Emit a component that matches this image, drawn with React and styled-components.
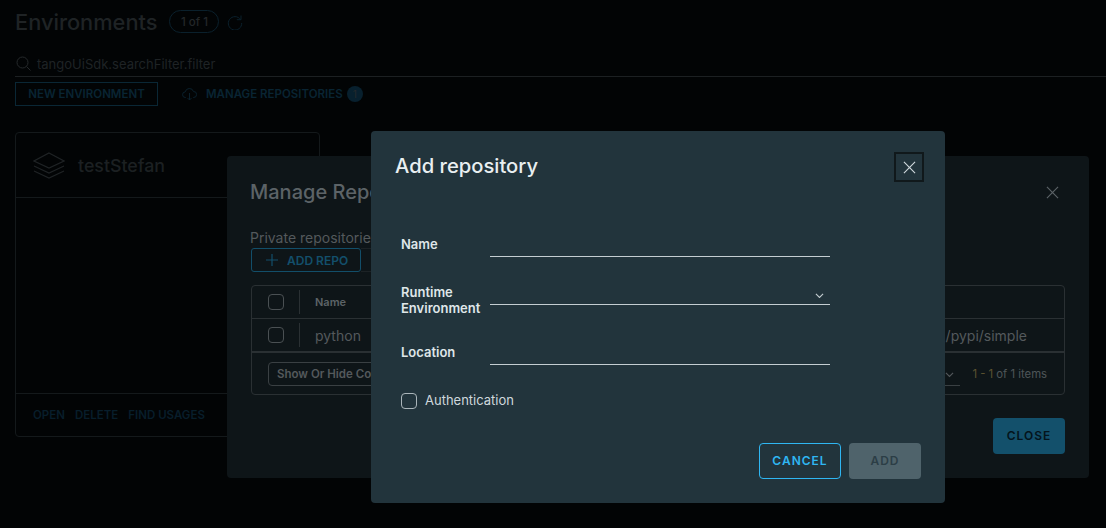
import React from 'react';
import styled, { createGlobalStyle } from 'styled-components';

const GlobalStyle = createGlobalStyle`
  html, body {
    margin: 0;
    padding: 0;
    height: 100%;
    background: #020405;
    overflow: hidden;
  }
  body, button {
    font-family: Inter, "Open Sans", sans-serif;
  }
  * {
    box-sizing: border-box;
  }
`;

const Page = styled.div`
  position: relative;
  width: 1106px;
  height: 528px;
  padding: 9px 0 0 15px;
  overflow: hidden;
`;

const Header = styled.div`
  display: flex;
  align-items: center;
  height: 25px;
`;

const PageTitle = styled.h1`
  margin: 0;
  font-size: 21.8px;
  font-weight: 500;
  color: #1f2325;
`;

const CountBadge = styled.span`
  margin-left: 12px;
  width: 50px;
  height: 23px;
  border: 1px solid #0a202c;
  border-radius: 12px;
  display: flex;
  align-items: center;
  justify-content: center;
  font-size: 11.5px;
  font-weight: 500;
  color: #232729;
`;

const IconSlot = styled.span`
  display: inline-flex;
  color: ${(p) => p.$color || '#0a202c'};
  margin: ${(p) => p.$margin || '0'};
`;

const SearchBar = styled.div`
  display: flex;
  align-items: center;
  gap: 6px;
  height: 25px;
  margin-top: 18px;
  padding: 1px 0 2px 1px;
  border-bottom: 1px solid #1c2022;
  font-size: 13px;
  color: #1f2325;
`;

const Toolbar = styled.div`
  display: flex;
  align-items: center;
  margin-top: 5px;
`;

const OutlineAction = styled.span`
  width: 143px;
  height: 24px;
  border: 1px solid #0a2735;
  display: flex;
  align-items: center;
  justify-content: center;
  font-size: 11.5px;
  font-weight: 600;
  color: #092433;
`;

const LinkAction = styled.span`
  margin-left: 9px;
  font-size: 11.5px;
  font-weight: 600;
  color: #092433;
`;

const RoundCount = styled.span`
  margin-left: 4px;
  width: 16px;
  height: 16px;
  border-radius: 50%;
  background: #08202e;
  display: flex;
  align-items: center;
  justify-content: center;
  font-size: 10px;
  color: #25292b;
`;

const EnvCard = styled.section`
  width: 305px;
  height: 305px;
  margin-top: 26px;
  border: 1px solid #14191b;
  border-radius: 4px;
  display: flex;
  flex-direction: column;
`;

const EnvHead = styled.div`
  display: flex;
  align-items: center;
  gap: 13px;
  height: 65px;
  padding-left: 17px;
  border-bottom: 1px solid #14191b;
  font-size: 17.8px;
  font-weight: 500;
  color: #1c2022;
`;

const EnvBody = styled.div`
  flex: 1;
`;

const EnvFoot = styled.div`
  display: flex;
  gap: 10px;
  height: 43px;
  align-items: center;
  padding-left: 17px;
  border-top: 1px solid #14191b;
  font-size: 11.5px;
  font-weight: 600;
  color: #081e2b;
`;

const Dialog = styled.div`
  position: absolute;
  display: flex;
  flex-direction: column;
  border-radius: 4px;
`;

const ManageDialog = styled(Dialog)`
  left: 227px;
  top: 156px;
  width: 862px;
  height: 322px;
  padding: 24px 24px 24px 23px;
  background: #0e1518;
`;

const DialogHead = styled.div`
  display: flex;
  justify-content: space-between;
  align-items: center;
  height: 24px;
`;

const ManageTitle = styled.h2`
  margin: 0;
  font-size: 20px;
  font-weight: 500;
  color: #5c6367;
`;

const ManageText = styled.div`
  margin-top: 26px;
  font-size: 14px;
  line-height: 16px;
  color: #54595c;
`;

const RepoActions = styled.div`
  display: flex;
  margin: 2px 0 0 1px;
  height: 24px;
`;

const AddRepoButton = styled.span`
  width: 110px;
  border: 1px solid #124e69;
  border-radius: 3px;
  display: flex;
  align-items: center;
  gap: 9px;
  padding-left: 14px;
  font-size: 12px;
  font-weight: 600;
  color: #134f6b;
`;

const GhostButton = styled.span`
  width: 40px;
  border: 1px solid #1c2225;
  border-left: none;
`;

const RepoTable = styled.div`
  width: 814px;
  margin: 13px 0 0 1px;
  border: 1px solid #2a3033;
  border-radius: 4px;
`;

const TableRow = styled.div`
  display: flex;
  align-items: center;
  height: ${(p) => p.$height}px;
  border-bottom: ${(p) => p.$rule || '1px'} solid #2a3033;
  padding-left: 16px;
`;

const RowCheck = styled.span`
  width: 16px;
  height: 16px;
  border: 1px solid #4a5053;
  border-radius: 4px;
`;

const ColRule = styled.span`
  width: 1px;
  height: 24px;
  margin: 0 15px 0 15px;
  background: #2a3033;
`;

const NameHead = styled.span`
  font-size: 11px;
  font-weight: 600;
  color: #5c6367;
`;

const NameCell = styled.span`
  font-size: 14px;
  color: #54595c;
`;

const PathCell = styled.span`
  margin-left: auto;
  margin-right: 37px;
  font-size: 14px;
  color: #54595c;
`;

const TableFoot = styled.div`
  display: flex;
  align-items: center;
  height: 41px;
  padding-left: 16px;
`;

const ColumnsButton = styled.span`
  width: 140px;
  height: 24px;
  border: 1px solid #3a4043;
  border-radius: 4px;
  display: flex;
  align-items: center;
  padding-left: 8px;
  font-size: 11.5px;
  font-weight: 600;
  white-space: nowrap;
  overflow: hidden;
  color: #54595c;
`;

const PageSize = styled.span`
  margin-left: auto;
  width: 30px;
  height: 24px;
  padding: 4px 0 0 8px;
  border-bottom: 1px solid #3a4043;
  display: flex;
  align-items: center;
  justify-content: center;
  color: #54595c;
`;

const ItemCount = styled.span`
  margin: 0 17px 0 12px;
  font-size: 11.3px;
  color: #4f5558;

  b {
    font-weight: 400;
    color: #5d5330;
  }
`;

const ManageFoot = styled.div`
  margin-top: auto;
  display: flex;
  justify-content: flex-end;
`;

const CloseButton = styled.span`
  width: 72px;
  height: 36px;
  padding-bottom: 2px;
  border-radius: 4px;
  background: #13506b;
  display: flex;
  align-items: center;
  justify-content: center;
  font-size: 12px;
  font-weight: 600;
  letter-spacing: 1px;
  color: #04141c;
`;

const IconClose = styled.span`
  display: flex;
  color: #5c6367;
  margin-right: 6px;
`;

const AddDialog = styled(Dialog)`
  left: 371px;
  top: 131px;
  width: 574px;
  height: 372px;
  padding: 21px 21px 24px 24px;
  background: #22343c;
`;

const AddHead = styled.div`
  display: flex;
  justify-content: space-between;
  align-items: flex-start;
`;

const AddTitle = styled.h2`
  margin: 0;
  font-size: 20.2px;
  line-height: 28px;
  font-weight: 500;
  color: #e9eff1;
`;

const FocusClose = styled.button`
  width: 30px;
  height: 30px;
  padding: 0;
  background: none;
  border: 2px solid #10181b;
  display: flex;
  align-items: center;
  justify-content: center;
  color: #cfd8dc;
`;

const Form = styled.div`
  display: flex;
  flex-direction: column;
  margin-top: 43px;
  padding-left: 6px;
`;

const FieldRow = styled.div`
  display: grid;
  grid-template-columns: 89px 340px;
  height: ${(p) => p.$height}px;
  margin-top: ${(p) => p.$gap || 0}px;
`;

const FieldLabel = styled.label`
  font-size: 13px;
  line-height: 16px;
  font-weight: 600;
  color: #dfe6e9;
  align-self: end;
  margin-bottom: ${(p) => (p.$low ? '-11px' : '5px')};
`;

const FieldLine = styled.div`
  border-bottom: 1px solid #c4cdd1;
  display: flex;
  align-items: flex-end;
  justify-content: flex-end;
  padding: 0 6px 6px 0;
  color: #c4cdd1;
`;

const CheckRow = styled.label`
  display: flex;
  align-items: center;
  gap: 8px;
  margin-top: 28px;
  font-size: 13px;
  color: #cfd8dc;
`;

const CheckText = styled.span`
  margin-top: -2px;
`;

const CheckBox = styled.span`
  width: 16px;
  height: 16px;
  border: 1px solid #aab5ba;
  border-radius: 4px;
`;

const AddFoot = styled.div`
  margin-top: auto;
  padding-right: 3px;
  display: flex;
  justify-content: flex-end;
  gap: 8px;
`;

const CancelButton = styled.button`
  width: 82px;
  height: 36px;
  padding: 0 0 2px;
  background: none;
  border: 1px solid #2fb6f2;
  border-radius: 4px;
  font-size: 12px;
  font-weight: 600;
  letter-spacing: 1px;
  color: #2fb6f2;
`;

const SubmitButton = styled.button`
  width: 72px;
  height: 36px;
  padding: 0 0 2px;
  background: #4f636b;
  border: none;
  border-radius: 4px;
  font-size: 12px;
  font-weight: 600;
  letter-spacing: 1px;
  color: #2c3e46;
`;

const X = ({ size = 13 }) => (
  <svg width={size} height={size} viewBox="0 0 14 14" fill="none" stroke="currentColor" strokeWidth="1.2">
    <path d="M1 1l12 12M13 1L1 13" />
  </svg>
);

const Chevron = ({ size = 9 }) => (
  <svg width={size} height={size * 0.6} viewBox="0 0 10 6" fill="none" stroke="currentColor" strokeWidth="1.2">
    <path d="M1 1l4 4 4-4" />
  </svg>
);

const App = () => (
  <Page>
    <GlobalStyle />
    <Header>
      <PageTitle>Environments</PageTitle>
      <CountBadge>1 of 1</CountBadge>
      <IconSlot $margin="0 0 0 8px">
        <svg width="16" height="16" viewBox="0 0 16 16" fill="none" stroke="currentColor" strokeWidth="1">
          <path d="M13.5 5.5A6.7 6.7 0 1 0 14.7 9" />
          <path d="M14 1.5v4.2H9.8" />
        </svg>
      </IconSlot>
    </Header>
    <SearchBar>
      <IconSlot $color="#25292b">
        <svg width="15" height="15" viewBox="0 0 15 15" fill="none" stroke="currentColor" strokeWidth="1">
          <circle cx="6.5" cy="6.5" r="5.5" />
          <path d="M10.5 10.5l4 4" />
        </svg>
      </IconSlot>
      tangoUiSdk.searchFilter.filter
    </SearchBar>
    <Toolbar>
      <OutlineAction>NEW ENVIRONMENT</OutlineAction>
      <IconSlot $margin="0 0 0 24px">
        <svg width="15" height="14" viewBox="0 0 15 14" fill="none" stroke="currentColor" strokeWidth="1">
          <path d="M4 10.5H3.5a2.8 2.8 0 0 1-.3-5.6 4.3 4.3 0 0 1 8.3-.4 3 3 0 0 1 .2 6H11" />
          <path d="M7.5 6v7M5.5 11l2 2 2-2" />
        </svg>
      </IconSlot>
      <LinkAction>MANAGE REPOSITORIES</LinkAction>
      <RoundCount>1</RoundCount>
    </Toolbar>
    <EnvCard>
      <EnvHead>
        <IconSlot $color="#1f2325">
          <svg width="32" height="28" viewBox="0 0 32 28" fill="none" stroke="currentColor" strokeWidth="1.2">
            <path d="M16 2L31 10 16 17 1 10z" />
            <path d="M1 15l15 7 15-7M1 20l15 7 15-7" />
          </svg>
        </IconSlot>
        testStefan
      </EnvHead>
      <EnvBody />
      <EnvFoot>
        <span>OPEN</span>
        <span>DELETE</span>
        <span>FIND USAGES</span>
      </EnvFoot>
    </EnvCard>

    <ManageDialog>
      <DialogHead>
        <ManageTitle>Manage Repositories</ManageTitle>
        <IconClose>
          <X />
        </IconClose>
      </DialogHead>
      <ManageText>Private repositories</ManageText>
      <RepoActions>
        <AddRepoButton>
          <svg width="12" height="12" viewBox="0 0 12 12" stroke="currentColor" strokeWidth="1.2">
            <path d="M6 0v12M0 6h12" />
          </svg>
          ADD REPO
        </AddRepoButton>
        <GhostButton />
      </RepoActions>
      <RepoTable>
        <TableRow $height={33}>
          <RowCheck />
          <ColRule />
          <NameHead>Name</NameHead>
        </TableRow>
        <TableRow $height={34} $rule="2px">
          <RowCheck />
          <ColRule />
          <NameCell>python</NameCell>
          <PathCell>/pypi/simple</PathCell>
        </TableRow>
        <TableFoot>
          <ColumnsButton>Show Or Hide Columns</ColumnsButton>
          <PageSize>
            <Chevron />
          </PageSize>
          <ItemCount>
            <b>1 - 1</b> of 1 items
          </ItemCount>
        </TableFoot>
      </RepoTable>
      <ManageFoot>
        <CloseButton>CLOSE</CloseButton>
      </ManageFoot>
    </ManageDialog>

    <AddDialog>
      <AddHead>
        <AddTitle>Add repository</AddTitle>
        <FocusClose>
          <X />
        </FocusClose>
      </AddHead>
      <Form>
        <FieldRow $height={32}>
          <FieldLabel>Name</FieldLabel>
          <FieldLine />
        </FieldRow>
        <FieldRow $height={32} $gap={16}>
          <FieldLabel $low>
            Runtime
            <br />
            Environment
          </FieldLabel>
          <FieldLine>
            <Chevron />
          </FieldLine>
        </FieldRow>
        <FieldRow $height={32} $gap={28}>
          <FieldLabel>Location</FieldLabel>
          <FieldLine />
        </FieldRow>
        <CheckRow>
          <CheckBox />
          <CheckText>Authentication</CheckText>
        </CheckRow>
      </Form>
      <AddFoot>
        <CancelButton>CANCEL</CancelButton>
        <SubmitButton>ADD</SubmitButton>
      </AddFoot>
    </AddDialog>
  </Page>
);

export default App;
